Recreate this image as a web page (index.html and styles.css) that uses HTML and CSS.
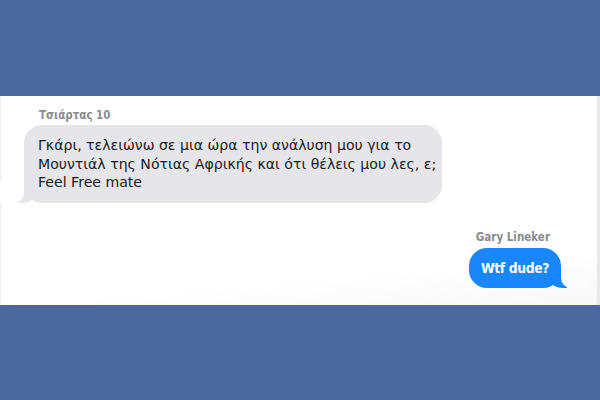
FILE: index.html
```html
<!DOCTYPE html>
<html lang="el">
<head>
<meta charset="utf-8">
<link rel="stylesheet" href="styles.css">
</head>
<body>
  <main class="panel">
    <div class="msg them">
      <div class="name">Τσιάρτας 10</div>
      <div class="bubble gray">Γκάρι, τελειώνω σε μια ώρα την ανάλυση μου για το<br>Μουντιάλ της Νότιας Αφρικής και ότι θέλεις μου λες, ε;<br>Feel Free mate</div>
    </div>
    <div class="msg me">
      <div class="name">Gary Lineker</div>
      <div class="bubble blue">Wtf dude?</div>
    </div>
  </main>
</body>
</html>
```
FILE: styles.css
```css
html, body {
  margin: 0;
  padding: 0;
}
body {
  background: #4b689f;
  width: 600px;
  height: 400px;
  overflow: hidden;
  font-family: "DejaVu Sans", Verdana, sans-serif;
}
.panel {
  margin-top: 96px;
  height: 209px;
  box-sizing: border-box;
  background: linear-gradient(175deg, #ffffff 80%, #f7f7f7 100%);
  border-left: 1px solid #ececec;
  border-right: 3px solid #e8e8ea;
  padding: 12px 36px 0 23px;
  display: flex;
  flex-direction: column;
}
.msg {
  display: flex;
  flex-direction: column;
  position: relative;
  z-index: 0;
}
.msg.them {
  align-items: flex-start;
}
.msg.me {
  align-items: flex-end;
  margin-top: 27px;
}
.name {
  font-family: "DejaVu Sans Condensed", "DejaVu Sans", sans-serif;
  font-size: 11.5px;
  font-weight: bold;
  color: #8a8a8e;
  line-height: 14px;
  margin-bottom: 3px;
}
.them .name {
  margin-left: 15px;
}
.me .name {
  margin-right: 11px;
  margin-bottom: 4px;
}
.bubble {
  position: relative;
  border-radius: 18px;
  white-space: nowrap;
}
.bubble.gray {
  background: #e5e5ea;
  color: #1b1b1b;
  font-size: 14.1px;
  line-height: 18.5px;
  padding: 11px 14px 11px 14px;
  width: 418px;
  box-sizing: border-box;
}
.bubble.blue {
  background: #1a86fb;
  color: #ffffff;
  font-family: "DejaVu Sans Condensed", "DejaVu Sans", sans-serif;
  font-size: 13.8px;
  letter-spacing: -0.4px;
  font-weight: bold;
  line-height: 20px;
  padding: 10px 12px;
  text-align: center;
}
.bubble::before,
.bubble::after {
  content: "";
  position: absolute;
  bottom: 0;
  height: 22px;
  z-index: -1;
}
.bubble.gray::before {
  left: -6px;
  width: 20px;
  background: #e5e5ea;
  border-bottom-right-radius: 16px 14px;
}
.bubble.gray::after {
  left: -26px;
  width: 26px;
  background: #ffffff;
  border-bottom-right-radius: 10px;
}
.bubble.blue::before {
  right: -6px;
  width: 20px;
  background: #1a86fb;
  border-bottom-left-radius: 16px 14px;
}
.bubble.blue::after {
  right: -26px;
  width: 26px;
  background: #fcfcfc;
  border-bottom-left-radius: 10px;
}
```
